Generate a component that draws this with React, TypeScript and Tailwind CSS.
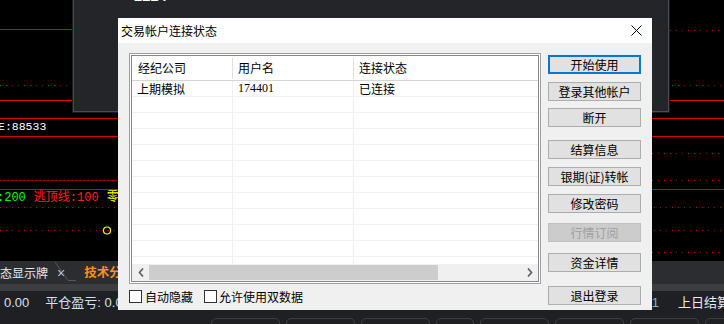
import React from "react";

const cjk = '"Noto Sans CJK SC", "Noto Sans", sans-serif';

function Chevron({ dir }: { dir: "l" | "r" }) {
  return (
    <svg width="6" height="9" viewBox="0 0 6 9">
      {dir === "l" ? (
        <path d="M5 0.5 L1.5 4.5 L5 8.5" stroke="#606060" strokeWidth="1.7" fill="none" />
      ) : (
        <path d="M1 0.5 L4.5 4.5 L1 8.5" stroke="#606060" strokeWidth="1.7" fill="none" />
      )}
    </svg>
  );
}

const buttons: { t: string; mt: string; kind?: "primary" | "disabled" }[] = [
  { t: "开始使用", mt: "mt-0", kind: "primary" },
  { t: "登录其他帐户", mt: "mt-[8px]" },
  { t: "断开", mt: "mt-[7px]" },
  { t: "结算信息", mt: "mt-[13px]" },
  { t: "银期(证)转帐", mt: "mt-[8px]" },
  { t: "修改密码", mt: "mt-[8px]" },
  { t: "行情订阅", mt: "mt-[10px]", kind: "disabled" },
  { t: "资金详情", mt: "mt-[11px]" },
  { t: "退出登录", mt: "mt-[14px]" },
];

const rows = [
  ["上期模拟", "174401", "已连接"],
  ["", "", ""],
  ["", "", ""],
  ["", "", ""],
  ["", "", ""],
  ["", "", ""],
  ["", "", ""],
  ["", "", ""],
  ["", "", ""],
  ["", "", ""],
  ["", "", ""],
  ["", "", ""],
];

const bottomBoxes = [69, 69, 69, 38, 69, 69, 69, 69];

export default function App() {
  return (
    <div
      className="relative w-[724px] h-[324px] overflow-hidden bg-black flex flex-col"
      style={{ fontFamily: cjk }}
    >
      {/* chart area */}
      <div className="relative h-[261px] shrink-0 bg-black">
        <svg className="absolute inset-0" width="724" height="261">
          <line x1="0" x2="72" y1="29.5" y2="29.5" stroke="#d80000" />
          <line x1="670" x2="724" y1="30.5" y2="30.5" stroke="#c80000" strokeDasharray="1 5" />
          <line x1="0" x2="724" y1="85.5" y2="85.5" stroke="#c80000" strokeDasharray="1 5" />
          <line x1="0" x2="724" y1="100.5" y2="100.5" stroke="#e80000" />
          <line x1="0" x2="724" y1="118.5" y2="118.5" stroke="#e00000" />
          <line x1="0" x2="724" y1="136.5" y2="136.5" stroke="#e00000" />
          <line x1="640" x2="724" y1="153.5" y2="153.5" stroke="#c80000" strokeDasharray="1 5" />
          <line x1="0" x2="120" y1="180.5" y2="180.5" stroke="#6a0000" />
          <line x1="0" x2="120" y1="180.5" y2="180.5" stroke="#e00000" strokeDasharray="1 3" />
          <line x1="640" x2="724" y1="180.5" y2="180.5" stroke="#c80000" strokeDasharray="1 5" />
          <line x1="0" x2="724" y1="189.5" y2="189.5" stroke="#e00000" />
          <line x1="0" x2="724" y1="207.5" y2="207.5" stroke="#c80000" strokeDasharray="1 5" />
          <line x1="0" x2="724" y1="230.5" y2="230.5" stroke="#c80000" strokeDasharray="1 5" />
          <line x1="640" x2="724" y1="252.5" y2="252.5" stroke="#c80000" strokeDasharray="1 5" />
          <circle cx="107" cy="230.5" r="3.5" stroke="#ffff00" strokeWidth="1.2" fill="none" />
        </svg>
        <span
          className="absolute left-[-2px] top-[120px] text-[11.5px] leading-[14px] text-white"
          style={{ fontFamily: '"Liberation Mono", monospace' }}
        >
          E:88533
        </span>
        <div
          className="absolute left-[-3px] top-[191px] flex text-[12px] leading-[14px] whitespace-nowrap"
          style={{ fontFamily: '"Liberation Mono", "Noto Sans CJK SC", monospace' }}
        >
          <span className="text-[#00ff00]">:200</span>
          <span className="ml-[8px] text-[#ff2020]">逃顶线:100</span>
          <span className="ml-[8px] text-[#ffff00]">零</span>
        </div>
      </div>

      {/* tab bar */}
      <div className="relative h-[23px] shrink-0 bg-[#2b2d31] flex items-center whitespace-nowrap">
        <span className="ml-0 text-[12px] leading-none text-[#e8e8e8]">态显示牌</span>
        <span className="ml-[9px] text-[14px] leading-none text-[#c8c8c8]" style={{ fontFamily: '"Liberation Sans", sans-serif' }}>
          ×
        </span>
        <svg className="absolute left-[54px] top-0" width="26" height="23" viewBox="0 0 26 23">
          <path d="M1 1 L14 19.5 L22 19.5" stroke="#55575c" strokeWidth="1" fill="none" />
        </svg>
        <span className="ml-[19px] text-[12.5px] leading-none font-bold text-[#ff8f1f]">技术分析</span>
      </div>
      <div className="h-[7px] shrink-0 bg-[#3c3d41]" />

      {/* bottom row */}
      <div className="flex-1 bg-[#1e2024] flex flex-col">
        <div
          className="h-[24px] flex items-center whitespace-nowrap text-[13px] text-[#d6e0ea]"
          style={{ fontFamily: '"Liberation Sans", "Noto Sans CJK SC", sans-serif' }}
        >
          <span className="ml-[4px]">0.00</span>
          <span className="ml-[16px]">平仓盈亏: 0.00</span>
          <div className="ml-auto mr-[-6px] flex">
            <span className="text-[#7fb2e0]">171</span>
            <span className="ml-[19px] text-[#e6edf5]">上日结算</span>
          </div>
        </div>
        <div className="mt-[3px] ml-[211px] flex gap-[6px]">
          {bottomBoxes.map((w, i) => (
            <div
              key={i}
              className="h-[20px] shrink-0 rounded-[5px] border border-[#3b3e44]"
              style={{ width: w }}
            />
          ))}
        </div>
      </div>

      {/* dark window behind dialog */}
      <div className="absolute left-[72px] top-[-3px] w-[598px] h-[116px] bg-[#1a1b1e] p-[1px]">
        <div className="relative w-full h-full border border-[#4a4c50] bg-[#232529]">
          <span className="absolute left-[60px] top-[-14px] text-[14px] font-bold text-white">2224</span>
        </div>
      </div>

      {/* dialog */}
      <div className="absolute left-[118px] top-[18px] w-[534px] h-[292px] bg-[#f0f0f0] flex flex-col text-black text-[12px]">
        <div className="h-[25px] shrink-0 bg-white flex items-center pl-[3px] pr-[10px]">
          <span className="leading-none">交易帐户连接状态</span>
          <svg className="ml-auto" width="11" height="11" viewBox="0 0 11 11">
            <path d="M0.5 0.5 L10.5 10.5 M10.5 0.5 L0.5 10.5" stroke="#000" strokeWidth="1" />
          </svg>
        </div>
        <div className="flex pl-[11px] pt-[10px]">
          <div className="flex flex-col w-[412px]">
            {/* list */}
            <div className="h-[231px] border border-[#a0a0a0] bg-white p-px">
              <div className="h-full border border-[#828790] flex flex-col overflow-hidden">
                <div className="h-[25px] shrink-0 flex items-center border-b border-[#d5d5d5] bg-white whitespace-nowrap">
                  <div className="w-[100px] pl-[6px] leading-none">经纪公司</div>
                  <div className="w-px h-[21px] bg-[#e0e0e0]" />
                  <div className="w-[120px] pl-[5px] leading-none">用户名</div>
                  <div className="w-px h-[21px] bg-[#e0e0e0]" />
                  <div className="flex-1 pl-[5px] leading-none">连接状态</div>
                </div>
                <div className="flex-1 overflow-hidden">
                  {rows.map((r, i) => (
                    <div key={i} className="h-[16px] flex border-b border-[#f0f0f0] whitespace-nowrap">
                      <div className="w-[101px] pl-[5px] border-r border-[#f0f0f0] leading-[15px]">{r[0]}</div>
                      <div
                        className="w-[121px] pl-[5px] border-r border-[#f0f0f0] leading-[15px]"
                        style={{ fontFamily: '"Liberation Serif", "Noto Sans CJK SC", serif' }}
                      >
                        {r[1]}
                      </div>
                      <div className="flex-1 pl-[5px] leading-[15px]">{r[2]}</div>
                    </div>
                  ))}
                </div>
                <div className="h-[17px] shrink-0 bg-[#f0f0f0] flex items-center">
                  <div className="w-[17px] flex justify-center">
                    <Chevron dir="l" />
                  </div>
                  <div className="w-[289px] h-[15px] bg-[#cdcdcd]" />
                  <div className="flex-1" />
                  <div className="w-[17px] flex justify-center">
                    <Chevron dir="r" />
                  </div>
                </div>
              </div>
            </div>
            {/* checkboxes */}
            <div className="mt-[6px] h-[13px] flex items-center whitespace-nowrap">
              <div className="w-[13px] h-[13px] border border-[#333333] bg-white" />
              <span className="ml-[3px] leading-none">自动隐藏</span>
              <div className="ml-[11px] w-[13px] h-[13px] border border-[#333333] bg-white" />
              <span className="ml-[2px] leading-none">允许使用双数据</span>
            </div>
          </div>
          <div className="flex flex-col ml-[7px] w-[93px] pt-[2px]">
            {buttons.map((b) => (
              <div
                key={b.t}
                className={
                  "h-[19px] flex items-center justify-center leading-none whitespace-nowrap " +
                  b.mt +
                  " " +
                  (b.kind === "primary"
                    ? "border-2 border-[#0078d7] bg-[#e1e1e1]"
                    : b.kind === "disabled"
                    ? "border border-[#bfbfbf] bg-[#cccccc] text-[#a0a0a0]"
                    : "border border-[#adadad] bg-[#e1e1e1]")
                }
              >
                {b.t}
              </div>
            ))}
          </div>
        </div>
      </div>
    </div>
  );
}
